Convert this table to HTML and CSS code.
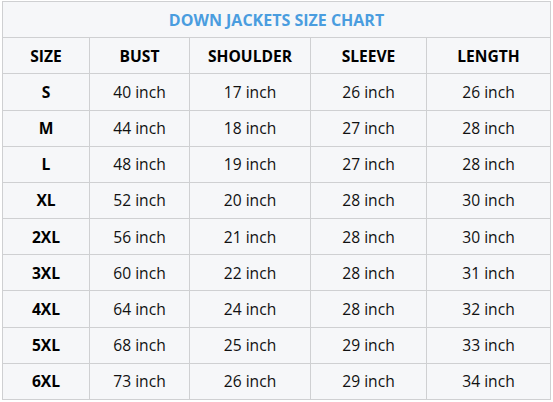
FILE: index.html
```html
<!DOCTYPE html>
<html>
<head>
<meta charset="utf-8">
<link rel="stylesheet" href="styles.css">
</head>
<body>
<table class="chart">
  <colgroup>
    <col class="c1"><col class="c2"><col class="c3"><col class="c4"><col class="c5">
  </colgroup>
  <tr><th colspan="5" class="title">DOWN JACKETS SIZE CHART</th></tr>
  <tr class="head"><th>SIZE</th><th>BUST</th><th>SHOULDER</th><th>SLEEVE</th><th>LENGTH</th></tr>
  <tr><th>S</th><td>40 inch</td><td>17 inch</td><td>26 inch</td><td>26 inch</td></tr>
  <tr><th>M</th><td>44 inch</td><td>18 inch</td><td>27 inch</td><td>28 inch</td></tr>
  <tr><th>L</th><td>48 inch</td><td>19 inch</td><td>27 inch</td><td>28 inch</td></tr>
  <tr><th>XL</th><td>52 inch</td><td>20 inch</td><td>28 inch</td><td>30 inch</td></tr>
  <tr><th>2XL</th><td>56 inch</td><td>21 inch</td><td>28 inch</td><td>30 inch</td></tr>
  <tr><th>3XL</th><td>60 inch</td><td>22 inch</td><td>28 inch</td><td>31 inch</td></tr>
  <tr><th>4XL</th><td>64 inch</td><td>24 inch</td><td>28 inch</td><td>32 inch</td></tr>
  <tr><th>5XL</th><td>68 inch</td><td>25 inch</td><td>29 inch</td><td>33 inch</td></tr>
  <tr><th>6XL</th><td>73 inch</td><td>26 inch</td><td>29 inch</td><td>34 inch</td></tr>
</table>
</body>
</html>
```
FILE: styles.css
```css
html, body {
  margin: 0;
  padding: 0;
  background: #ffffff;
}
body {
  padding: 1px 0 0 2px;
  font-family: "Open Sans", "Noto Sans", sans-serif;
}
.chart {
  border-collapse: collapse;
  width: 548px;
  table-layout: fixed;
  background: #f6f7f9;
  color: #111;
  font-size: 15.6px;
}
.c1 { width: 87px; }
.c2 { width: 100px; }
.c3 { width: 121px; }
.c4 { width: 116px; }
.c5 { width: 124px; }
.chart th, .chart td {
  border: 1px solid #cfd0d2;
  text-align: center;
  height: 36.18px;
  padding: 0;
  box-sizing: border-box;
}
.chart td {
  font-weight: 400;
}
.chart th {
  font-weight: 700;
  color: #000;
}
.chart .title {
  color: #4a9ddf;
  font-size: 16px;
}
```
